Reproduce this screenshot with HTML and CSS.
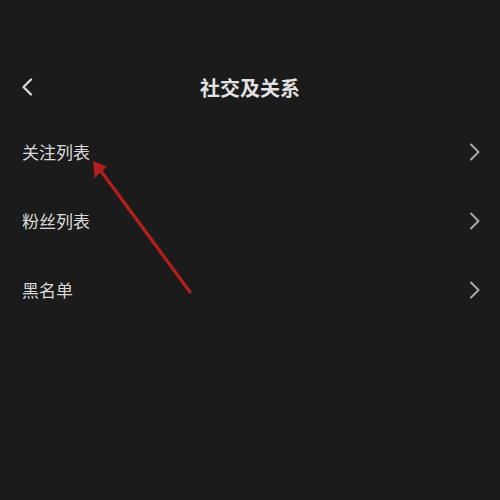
FILE: index.html
```html
<!DOCTYPE html>
<html lang="zh">
<head>
<meta charset="utf-8">
<link rel="stylesheet" href="styles.css">
</head>
<body>
<div class="screen">
  <header class="header">
    <span class="back">
      <svg width="12" height="18" viewBox="0 0 12 18"><path d="M10 1.5 L2.5 9 L10 16.5" fill="none" stroke="#dcdcdc" stroke-width="2.2" stroke-linecap="round" stroke-linejoin="round"/></svg>
    </span>
    <h1 class="title">社交及关系</h1>
  </header>
  <ul class="list">
    <li class="row"><span class="label">关注列表</span><svg class="chev" width="12" height="18" viewBox="0 0 12 18"><path d="M2 1.5 L9.5 9 L2 16.5" fill="none" stroke="#a9a9a9" stroke-width="2" stroke-linecap="round" stroke-linejoin="round"/></svg></li>
    <li class="row"><span class="label">粉丝列表</span><svg class="chev" width="12" height="18" viewBox="0 0 12 18"><path d="M2 1.5 L9.5 9 L2 16.5" fill="none" stroke="#a9a9a9" stroke-width="2" stroke-linecap="round" stroke-linejoin="round"/></svg></li>
    <li class="row"><span class="label">黑名单</span><svg class="chev" width="12" height="18" viewBox="0 0 12 18"><path d="M2 1.5 L9.5 9 L2 16.5" fill="none" stroke="#a9a9a9" stroke-width="2" stroke-linecap="round" stroke-linejoin="round"/></svg></li>
  </ul>
  <svg class="arrow" width="500" height="500" viewBox="0 0 500 500">
    <line x1="190" y1="292" x2="98" y2="167" stroke="#b3201c" stroke-width="3.2" stroke-linecap="round"/>
    <polygon points="93,161 94.5,178 107,166.5" fill="#b3201c"/>
  </svg>
</div>
</body>
</html>
```
FILE: styles.css
```css
* { box-sizing: border-box; }
html, body {
  margin: 0;
  padding: 0;
  background: #1b1b1b;
}
body {
  font-family: "Noto Sans CJK SC", "Noto Sans", sans-serif;
  color: #dcdcdc;
}
.screen {
  position: relative;
  width: 500px;
  height: 500px;
  padding-top: 70px;
}
.header {
  height: 35px;
  display: flex;
  align-items: center;
  justify-content: center;
  position: relative;
}
.back {
  position: absolute;
  left: 21px;
  top: 8px;
  display: flex;
}
.title {
  margin: 0;
  font-size: 20px;
  font-weight: 700;
  color: #e2e2e2;
  letter-spacing: 0;
  line-height: 1;
}
.list {
  list-style: none;
  margin: 12px 0 0;
  padding: 0;
}
.row {
  height: 69px;
  display: flex;
  align-items: center;
  justify-content: space-between;
  padding: 0 19px 0 22px;
}
.label {
  font-size: 17px;
  line-height: 1;
  color: #d9d9d9;
}
.chev {
  display: block;
}
.arrow {
  position: absolute;
  left: 0;
  top: 0;
  pointer-events: none;
}
```
